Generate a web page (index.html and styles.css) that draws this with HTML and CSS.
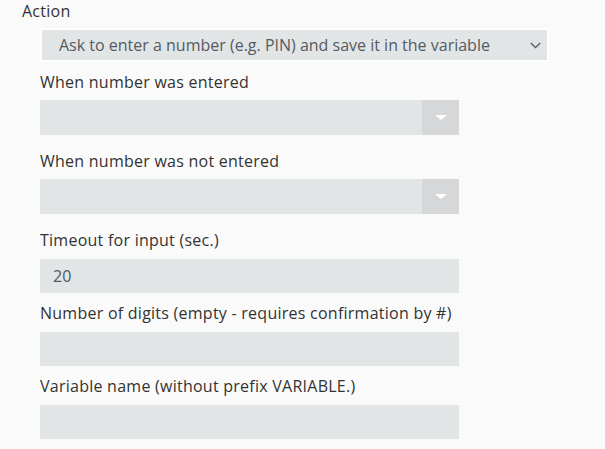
FILE: index.html
```html
<!DOCTYPE html>
<html>
<head>
<meta charset="utf-8">
<link rel="stylesheet" href="styles.css">
</head>
<body>
<div class="form">
  <div class="action-label">Action</div>
  <div class="action-select">
    <span class="action-text">Ask to enter a number (e.g. PIN) and save it in the variable</span>
    <svg class="chev" width="11" height="7" viewBox="0 0 11 7"><path d="M0.8 1 L5.5 5.6 L10.2 1" fill="none" stroke="#5a6168" stroke-width="1.4"/></svg>
  </div>
  <div class="group combo-group">
    <div class="label">When number was entered</div>
    <div class="field combo"><div class="combo-btn"><span class="tri"></span></div></div>
  </div>
  <div class="group combo-group">
    <div class="label">When number was not entered</div>
    <div class="field combo"><div class="combo-btn"><span class="tri"></span></div></div>
  </div>
  <div class="group text-group">
    <div class="label">Timeout for input (sec.)</div>
    <div class="field input">20</div>
  </div>
  <div class="group text-group">
    <div class="label">Number of digits (empty - requires confirmation by #)</div>
    <div class="field input"></div>
  </div>
  <div class="group text-group">
    <div class="label">Variable name (without prefix VARIABLE.)</div>
    <div class="field input"></div>
  </div>
</div>
</body>
</html>
```
FILE: styles.css
```css
html, body {
  margin: 0;
  padding: 0;
  background: #fafafa;
  font-family: "Open Sans", "Liberation Sans", sans-serif;
}
.form {
  display: flex;
  flex-direction: column;
  padding: 1px 0 0 22px;
}
.action-label {
  font-size: 16px;
  line-height: 20px;
  font-weight: 500;
  letter-spacing: 0.25px;
  color: #333;
}
.action-select {
  margin: 7px 0 0 18px;
  border: 2px solid #ffffff;
  background: #e2e5e6;
  display: flex;
  align-items: center;
  justify-content: space-between;
  padding: 0 6px 0 17px;
  box-sizing: border-box;
  width: 509px;
  height: 34px;
}
.action-text {
  font-size: 16px;
  color: #545b62;
}
.chev {
  display: block;
}
.group {
  display: flex;
  flex-direction: column;
  margin-left: 18px;
}
.label {
  font-size: 16px;
  line-height: 20px;
  font-weight: 500;
  letter-spacing: 0.25px;
  color: #333;
  margin-top: 10px;
  margin-bottom: 8px;
}
.combo-group {
  margin-bottom: 6px;
}
.text-group .label {
  margin-bottom: 9px;
}
.field {
  width: 419px;
  height: 35px;
  background: #e2e5e6;
  box-sizing: border-box;
}
.combo {
  display: flex;
  justify-content: flex-end;
}
.combo-btn {
  width: 37px;
  height: 100%;
  background: #d5d7d8;
  display: flex;
  align-items: center;
  justify-content: center;
}
.tri {
  width: 0;
  height: 0;
  border-left: 6px solid transparent;
  border-right: 6px solid transparent;
  border-top: 5px solid #ffffff;
}
.input {
  height: 34px;
  display: flex;
  align-items: center;
  padding-left: 13px;
  font-size: 16px;
  color: #4f5862;
}
```
